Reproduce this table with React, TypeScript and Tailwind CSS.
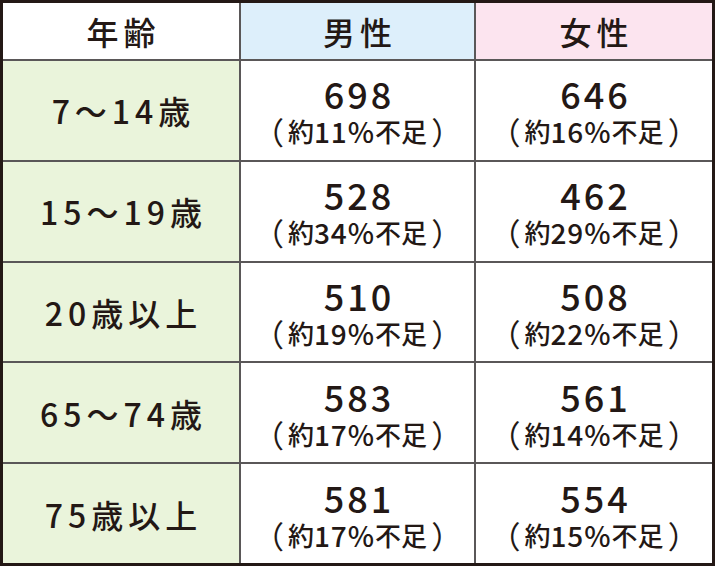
const rows = [
  { age: '7〜14歳', m: '698', mp: '11', f: '646', fp: '16' },
  { age: '15〜19歳', m: '528', mp: '34', f: '462', fp: '29' },
  { age: '20歳以上', m: '510', mp: '19', f: '508', fp: '22' },
  { age: '65〜74歳', m: '583', mp: '17', f: '561', fp: '14' },
  { age: '75歳以上', m: '581', mp: '17', f: '554', fp: '15' },
];

const font = { fontFamily: '"Noto Sans CJK JP", "Noto Sans", sans-serif' };

function Value({ n, p }: { n: string; p: string }) {
  return (
    <div className="bg-white flex flex-col items-center justify-center text-[#231815]">
      <div className="text-[36px] leading-[42px] font-medium tracking-[3px] pl-[3px]">{n}</div>
      <div className="flex items-center text-[26px] leading-[34px] font-medium">
        <span className="text-[31px] font-normal pr-[4px]">（</span>
        <span>約</span>
        <span className="text-[28px] tracking-[1px]">{p}%</span>
        <span>不足</span>
        <span className="text-[31px] font-normal pl-[4px]">）</span>
      </div>
    </div>
  );
}

export default function App() {
  return (
    <div style={font} className="w-[715px] h-[566px] border-[3px] border-[#231815] bg-[#5a5758] grid grid-cols-[236px_233px_236px] grid-rows-[56px_repeat(5,1fr)] gap-[2px]">
      <div className="bg-white flex items-center justify-center text-[32px] font-medium tracking-[5px] pl-[5px] text-[#231815]">年齢</div>
      <div className="bg-[#ddeffb] flex items-center justify-center text-[32px] font-medium tracking-[5px] pl-[5px] text-[#231815]">男性</div>
      <div className="bg-[#fce4ef] flex items-center justify-center text-[32px] font-medium tracking-[5px] pl-[5px] text-[#231815]">女性</div>
      {rows.map((r) => (
        <>
          <div key={r.age} className="bg-[#eaf4db] flex items-center justify-center text-[32px] font-medium tracking-[5px] pl-[5px] text-[#231815]">
            {r.age}
          </div>
          <Value n={r.m} p={r.mp} />
          <Value n={r.f} p={r.fp} />
        </>
      ))}
    </div>
  );
}
